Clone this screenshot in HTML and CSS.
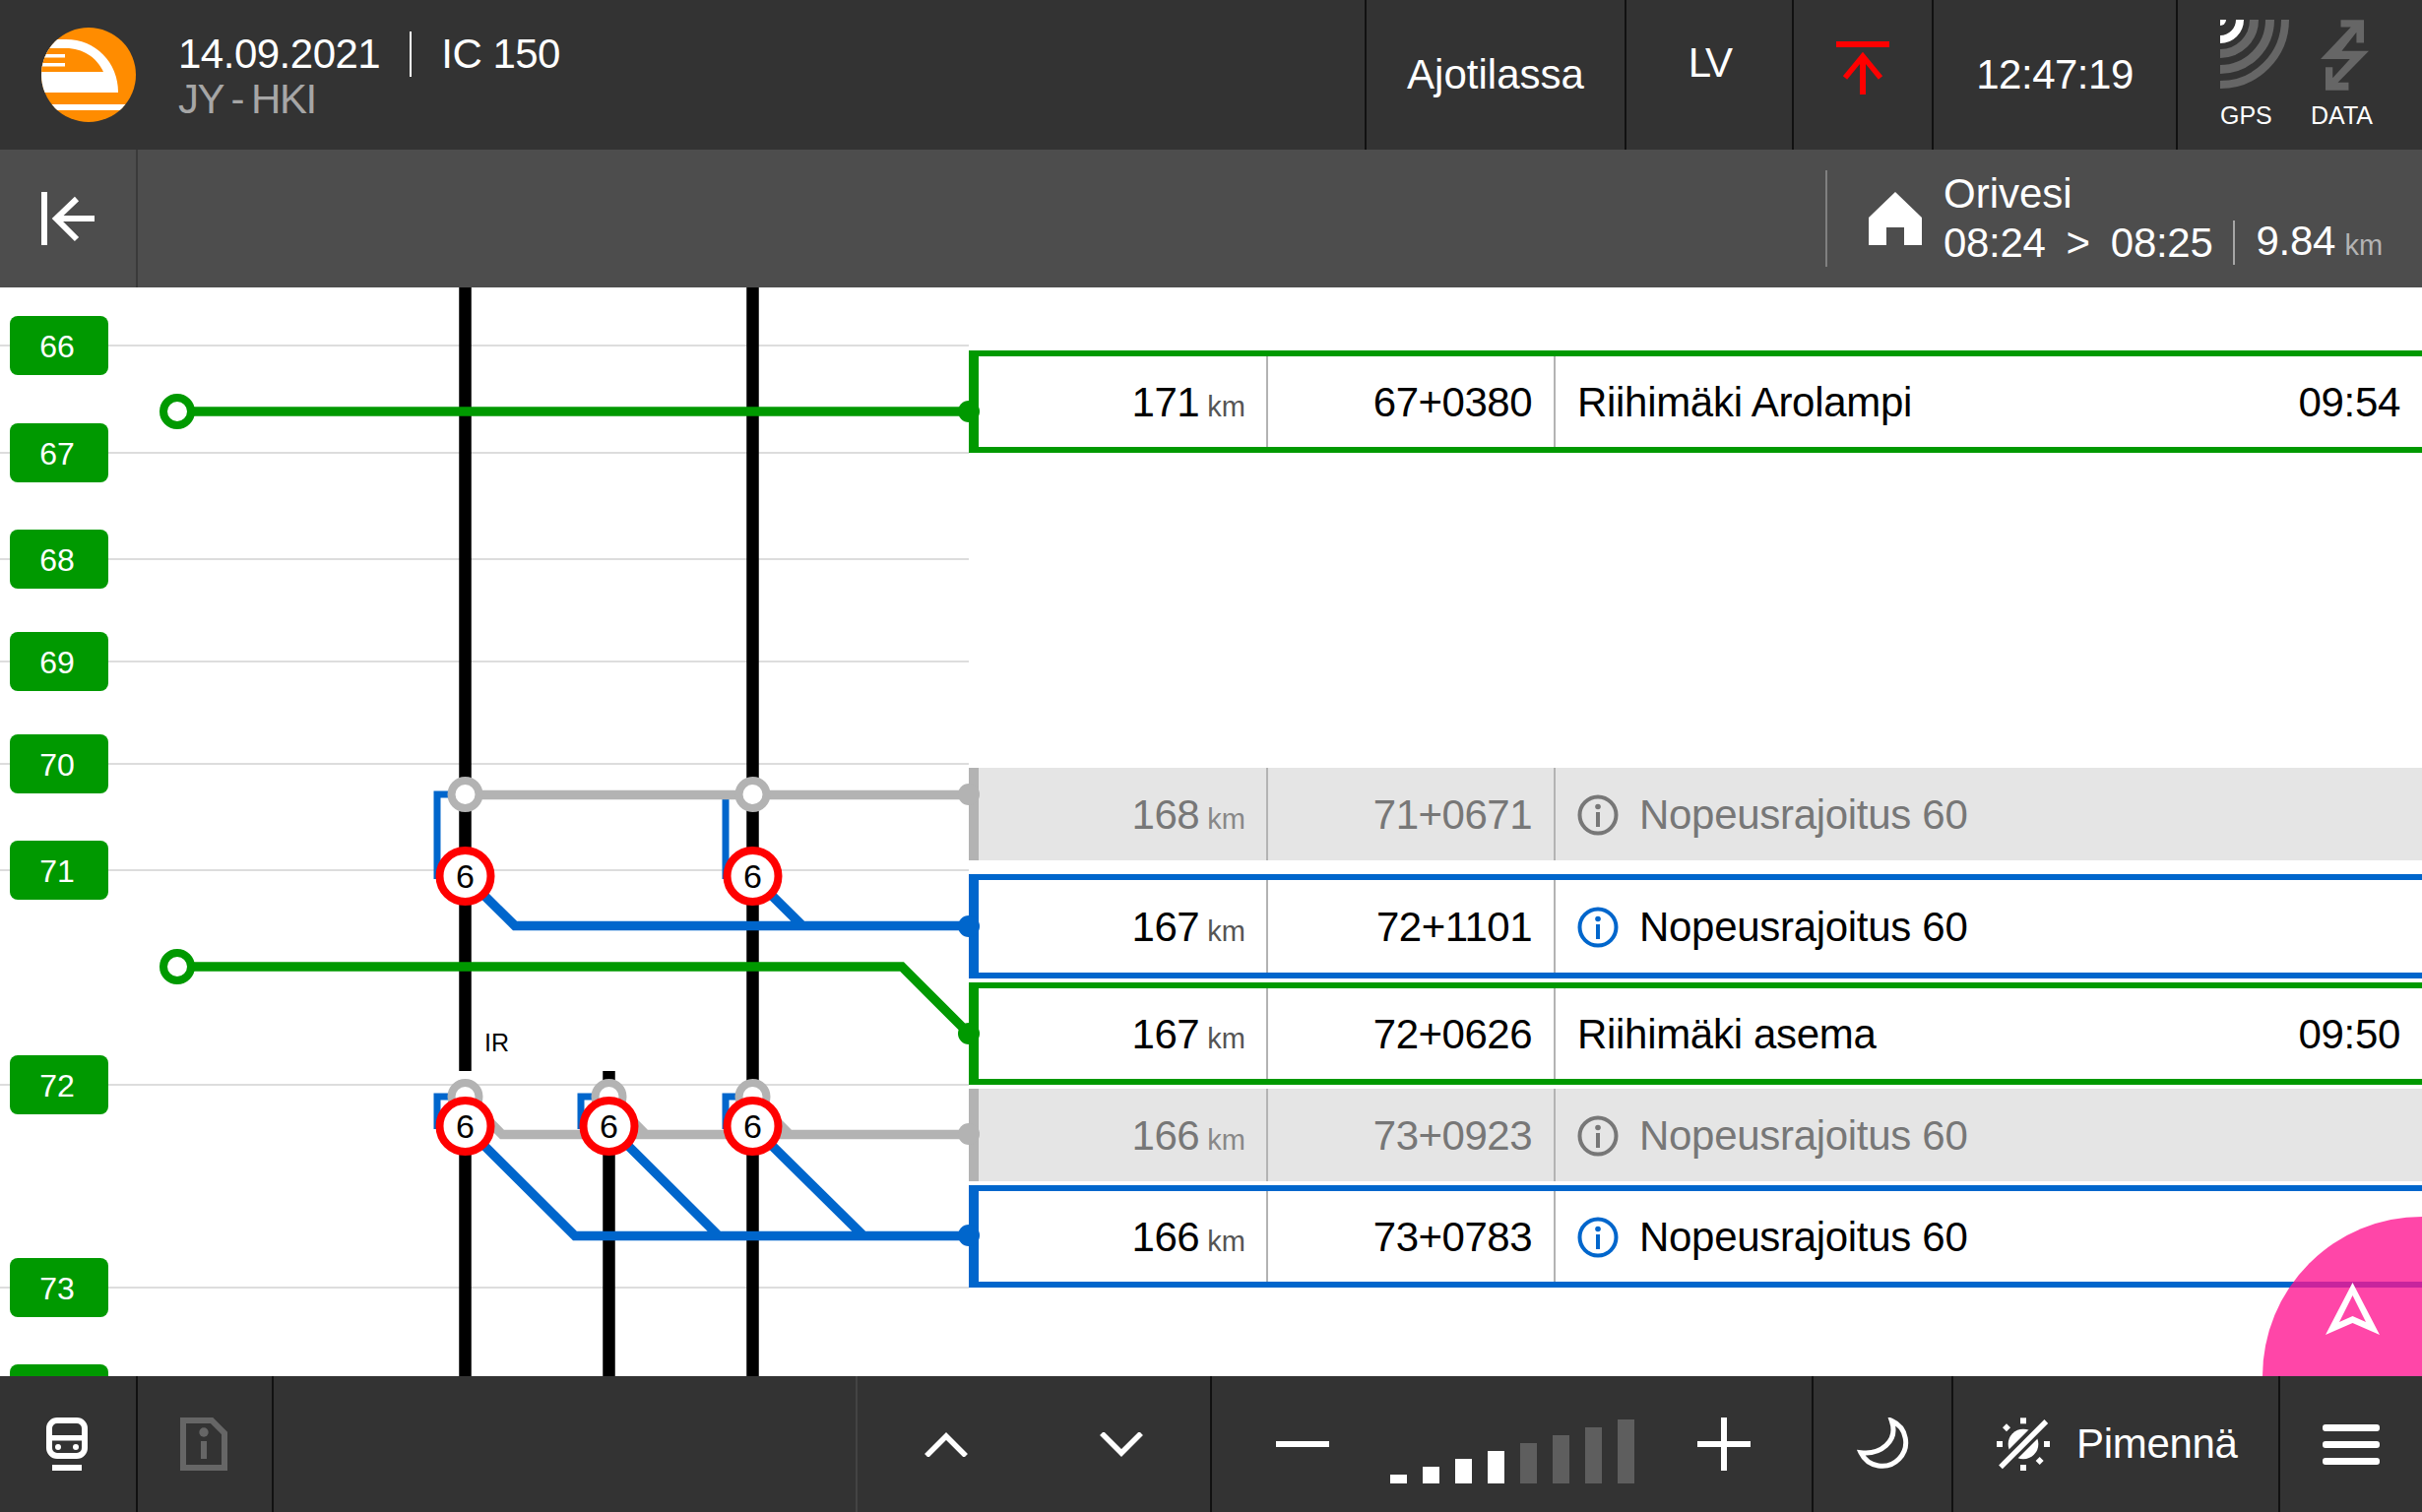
FILE: index.html
```html
<!DOCTYPE html>
<html lang="fi">

<head>
    <meta charset="UTF-8">
    <title>Ajotila - IC 150</title>
    <link rel="stylesheet" href="styles.css">
</head>

<body>
    <div class="screen">

        <!-- Top bar -->
        <header class="topbar">
            <svg class="logo" viewBox="0 0 96 96" width="96" height="96">
                <clipPath id="logoClip"><circle cx="48" cy="48" r="48"/></clipPath>
                <g clip-path="url(#logoClip)">
                    <rect width="96" height="96" fill="#ff8c00"/>
                    <path d="M0 12H25C55 12 78 35 78 66H0Z" fill="#fff"/>
                    <path d="M0 21H25C42 21 56 30 63 45H0Z" fill="#ff8c00"/>
                    <rect x="0" y="27" width="24" height="3.5" fill="#fff"/>
                    <rect x="0" y="36" width="24" height="3.5" fill="#fff"/>
                    <rect x="0" y="78" width="96" height="6" fill="#fff"/>
                </g>
            </svg>
            <div class="trip">
                <div class="trip-main">
                    <span class="digits">14.09.2021</span>
                    <span class="trip-sep"></span>
                    <span class="digits">IC 150</span>
                </div>
                <div class="trip-route">JY - HKI</div>
            </div>
            <div class="top-cell cell-mode">Ajotilassa</div>
            <div class="top-cell cell-lv"><span>LV</span></div>
            <div class="top-cell cell-dir">
                <svg viewBox="0 0 54 54" width="54" height="54">
                    <rect x="0" y="0" width="54" height="6" fill="#f00"/>
                    <path d="M27 54V16" fill="none" stroke="#f00" stroke-width="6"/>
                    <path d="M9 37L27 15L45 37" fill="none" stroke="#f00" stroke-width="5.500"/>
                </svg>
            </div>
            <div class="top-cell cell-clock digits">12:47:19</div>
            <div class="top-cell cell-status">
                <div class="status-item status-gps">
                    <svg viewBox="0 0 70 72" width="70" height="72">
                        <clipPath id="gpsClip"><rect width="70" height="72"/></clipPath>
                        <g clip-path="url(#gpsClip)" fill="none">
                            <circle cx="0" cy="0" r="6" fill="#fff"/>
                            <circle cx="0" cy="0" r="20" stroke="#fff" stroke-width="8"/>
                            <circle cx="0" cy="0" r="34.5" stroke="#666" stroke-width="9"/>
                            <circle cx="0" cy="0" r="50.5" stroke="#666" stroke-width="9"/>
                            <circle cx="0" cy="0" r="66" stroke="#666" stroke-width="8"/>
                        </g>
                    </svg>
                    <span>GPS</span>
                </div>
                <div class="status-item status-data">
                    <svg viewBox="355 30 148 216" width="49" height="72">
                        <path d="M417 30H488V100H465V68L420 125H503L408 222H441V246H370V175H392V208L445 150H355L448 52H417Z" fill="#666"/>
                    </svg>
                    <span>DATA</span>
                </div>
            </div>
        </header>

        <!-- Next stop bar -->
        <div class="subbar">
            <div class="back-cell">
                <svg viewBox="0 0 54 54" width="54" height="54">
                    <rect x="0" y="0" width="6" height="54" fill="#fff"/>
                    <path d="M54 27H15M36 7L15 27L36 48" fill="none" stroke="#fff" stroke-width="6"/>
                </svg>
            </div>
            <div class="next-stop">
                <svg class="home-icon" viewBox="0 0 54 54" width="54" height="54">
                    <path d="M27 0L54 26V54H36V36H18V54H0V26Z" fill="#fff"/>
                </svg>
                <div class="next-text">
                    <div>Orivesi</div>
                    <div class="next-times">
                        <span>08:24</span>
                        <span>&gt;</span>
                        <span>08:25</span>
                        <span class="next-sep"></span>
                        <span>9.84 <small>km</small></span>
                    </div>
                </div>
            </div>
        </div>

        <!-- Track view -->
        <main class="track-view">
            <svg class="diagram" viewBox="0 292 1000 1106" width="1000" height="1106">
                <g class="grid-lines">
                    <path d="M0 351H984M0 460H984M0 568H984M0 672H984M0 776H984M0 884H984M0 1102H984M0 1308H984"/>
                </g>

                <g class="rails">
                    <path d="M472.5 292V1088M472.5 1114V1398M618.5 1088V1398M764.5 292V1398"/>
                </g>

                <g class="km-badges">
                    <rect x="10" y="321" width="100" height="60" rx="8"/><text x="58" y="363">66</text>
                    <rect x="10" y="430" width="100" height="60" rx="8"/><text x="58" y="472">67</text>
                    <rect x="10" y="538" width="100" height="60" rx="8"/><text x="58" y="580">68</text>
                    <rect x="10" y="642" width="100" height="60" rx="8"/><text x="58" y="684">69</text>
                    <rect x="10" y="746" width="100" height="60" rx="8"/><text x="58" y="788">70</text>
                    <rect x="10" y="854" width="100" height="60" rx="8"/><text x="58" y="896">71</text>
                    <rect x="10" y="1072" width="100" height="60" rx="8"/><text x="58" y="1114">72</text>
                    <rect x="10" y="1278" width="100" height="60" rx="8"/><text x="58" y="1320">73</text>
                    <rect x="10" y="1386" width="100" height="60" rx="8"/>
                </g>

                <!-- blue brackets lie under the grey lines -->
                <g class="line-thin">
                    <path d="M472 807H444V893M764 807H737V893"/>
                    <path d="M472 1114H444V1147M618 1114H590V1147M764 1114H737V1147"/>
                </g>

                <g class="line line-grey">
                    <path d="M472 807.500H984"/>
                    <path d="M472 1114L510 1152.500H984M618 1114L656 1152.500M764 1114L802 1152.500"/>
                    <circle class="ring" cx="472.5" cy="807" r="14"/>
                    <circle class="ring" cx="764.5" cy="807" r="14"/>
                    <circle class="ring" cx="472.5" cy="1114" r="14"/>
                    <circle class="ring" cx="618.5" cy="1114" r="14"/>
                    <circle class="ring" cx="764.5" cy="1114" r="14"/>
                    <circle class="dot" cx="984" cy="807" r="11"/>
                    <circle class="dot" cx="984" cy="1152" r="11"/>
                </g>

                <g class="line line-blue">
                    <path d="M472 890L523 940.500H984M764 890L815 940.500"/>
                    <path d="M472 1144L584 1255.500H984M618 1144L730 1255.500M764 1144L877 1255.500"/>
                    <circle class="dot" cx="984" cy="941" r="11"/>
                    <circle class="dot" cx="984" cy="1255" r="11"/>
                </g>

                <g class="line line-green">
                    <path d="M180 418H984"/>
                    <path d="M180 982H916L984 1050"/>
                    <circle class="ring" cx="180" cy="418" r="14"/>
                    <circle class="ring" cx="180" cy="982" r="14"/>
                    <circle class="dot" cx="984" cy="418" r="11"/>
                    <circle class="dot" cx="984" cy="1050" r="11"/>
                </g>

                <g class="speed-signs">
                    <circle cx="472.5" cy="890" r="26"/><text x="472.5" y="902">6</text>
                    <circle cx="764.5" cy="890" r="26"/><text x="764.5" y="902">6</text>
                    <circle cx="472.5" cy="1144" r="26"/><text x="472.5" y="1156">6</text>
                    <circle cx="618.5" cy="1144" r="26"/><text x="618.5" y="1156">6</text>
                    <circle cx="764.5" cy="1144" r="26"/><text x="764.5" y="1156">6</text>
                </g>

                <text class="rail-label" x="492" y="1068">IR</text>
            </svg>

            <div class="rows">
                <div class="row row-green">
                    <div class="col-km"><span>171 <small>km</small></span></div>
                    <div class="col-pos">67+0380</div>
                    <div class="col-name"><span>Riihimäki Arolampi</span><span class="col-time">09:54</span></div>
                </div>

                <div class="row row-grey row-after-gap">
                    <div class="col-km"><span>168 <small>km</small></span></div>
                    <div class="col-pos">71+0671</div>
                    <div class="col-name">
                        <svg class="info" viewBox="0 0 42 42" width="42" height="42"><circle cx="21" cy="21" r="18.500" fill="none" stroke="currentColor" stroke-width="4"/><circle cx="21" cy="12.500" r="2.800" fill="currentColor"/><rect x="19" y="18" width="4" height="15" fill="currentColor"/></svg>
                        <span>Nopeusrajoitus 60</span>
                    </div>
                </div>

                <div class="row row-blue row-tall">
                    <div class="col-km"><span>167 <small>km</small></span></div>
                    <div class="col-pos">72+1101</div>
                    <div class="col-name">
                        <svg class="info" viewBox="0 0 42 42" width="42" height="42"><circle cx="21" cy="21" r="18.500" fill="none" stroke="currentColor" stroke-width="4"/><circle cx="21" cy="12.500" r="2.800" fill="currentColor"/><rect x="19" y="18" width="4" height="15" fill="currentColor"/></svg>
                        <span>Nopeusrajoitus 60</span>
                    </div>
                </div>

                <div class="row row-green">
                    <div class="col-km"><span>167 <small>km</small></span></div>
                    <div class="col-pos">72+0626</div>
                    <div class="col-name"><span>Riihimäki asema</span><span class="col-time">09:50</span></div>
                </div>

                <div class="row row-grey">
                    <div class="col-km"><span>166 <small>km</small></span></div>
                    <div class="col-pos">73+0923</div>
                    <div class="col-name">
                        <svg class="info" viewBox="0 0 42 42" width="42" height="42"><circle cx="21" cy="21" r="18.500" fill="none" stroke="currentColor" stroke-width="4"/><circle cx="21" cy="12.500" r="2.800" fill="currentColor"/><rect x="19" y="18" width="4" height="15" fill="currentColor"/></svg>
                        <span>Nopeusrajoitus 60</span>
                    </div>
                </div>

                <div class="row row-blue">
                    <div class="col-km"><span>166 <small>km</small></span></div>
                    <div class="col-pos">73+0783</div>
                    <div class="col-name">
                        <svg class="info" viewBox="0 0 42 42" width="42" height="42"><circle cx="21" cy="21" r="18.500" fill="none" stroke="currentColor" stroke-width="4"/><circle cx="21" cy="12.500" r="2.800" fill="currentColor"/><rect x="19" y="18" width="4" height="15" fill="currentColor"/></svg>
                        <span>Nopeusrajoitus 60</span>
                    </div>
                </div>
            </div>

            <div class="nav-fab">
                <svg viewBox="0 0 55 53" width="55" height="53">
                    <path d="M27.500 0L55 53L27.500 41L0 53ZM27.500 13L14 40L27.500 34L41 40Z" fill="#fff" fill-rule="evenodd"/>
                </svg>
            </div>
        </main>

        <!-- Bottom bar -->
        <footer class="bottombar">
            <div class="bottom-cell cell-train">
                <svg viewBox="0 0 42 54" width="42" height="54">
                    <rect x="3" y="3" width="36" height="36" rx="8" fill="none" stroke="#fff" stroke-width="6"/>
                    <rect x="3" y="18" width="36" height="5.500" fill="#fff"/>
                    <circle cx="12" cy="30" r="3" fill="#fff"/>
                    <circle cx="30" cy="30" r="3" fill="#fff"/>
                    <rect x="6" y="48" width="30" height="6" fill="#fff"/>
                </svg>
            </div>
            <div class="bottom-cell cell-doc">
                <svg viewBox="0 0 48 54" width="48" height="54">
                    <path d="M3 3H32L45 16V51H3Z" fill="none" stroke="#666" stroke-width="6"/>
                    <circle cx="24" cy="15" r="4.700" fill="#666"/>
                    <rect x="21" y="24" width="6" height="18" fill="#666"/>
                </svg>
            </div>
            <div class="bottom-spacer"></div>
            <div class="bottom-cell cell-scroll">
                <svg viewBox="0 0 44 25" width="44" height="25"><path d="M2 24L22 4L42 24" fill="none" stroke="#fff" stroke-width="5.500"/></svg>
                <svg viewBox="0 0 44 25" width="44" height="25"><path d="M2 1L22 21L42 1" fill="none" stroke="#fff" stroke-width="5.500"/></svg>
            </div>
            <div class="bottom-cell cell-bright">
                <span class="minus"></span>
                <div class="bars">
                    <span class="bar-on" style="height: 9px"></span>
                    <span class="bar-on" style="height: 17px"></span>
                    <span class="bar-on" style="height: 25px"></span>
                    <span class="bar-on" style="height: 33px"></span>
                    <span style="height: 41px"></span>
                    <span style="height: 49px"></span>
                    <span style="height: 57px"></span>
                    <span style="height: 65px"></span>
                </div>
                <span class="plus"></span>
            </div>
            <div class="bottom-cell cell-moon">
                <svg viewBox="50 46 162 162" width="54" height="54">
                    <path d="M156 56A72 72 0 1 1 62 153C120 160 178 120 156 56Z" fill="none" stroke="#fff" stroke-width="15"/>
                </svg>
            </div>
            <div class="bottom-cell cell-dim">
                <svg viewBox="474 44 162 162" width="54" height="54">
                    <circle cx="555" cy="125" r="46" fill="#fff"/>
                    <path d="M484 196L626 54" stroke="#333" stroke-width="38"/>
                    <path d="M486 195L625 56" stroke="#fff" stroke-width="16"/>
                    <rect x="546" y="45" width="18" height="18" fill="#fff"/>
                    <rect x="546" y="188" width="18" height="18" fill="#fff"/>
                    <rect x="474" y="116" width="18" height="18" fill="#fff"/>
                    <rect x="618" y="116" width="18" height="18" fill="#fff"/>
                    <path d="M504 63L516 75L504 87L492 75ZM605 164L617 176L605 188L593 176Z" fill="#fff"/>
                </svg>
                <span>Pimennä</span>
            </div>
            <div class="bottom-cell cell-menu">
                <span></span>
                <span></span>
                <span></span>
            </div>
        </footer>
    </div>
</body>

</html>
```

FILE: styles.css
```css
* {
    box-sizing: border-box;
}

html,
body {
    margin: 0;
    padding: 0;
    overflow: hidden;
}

body {
    font-family: "Liberation Sans", Arial, sans-serif;
    font-size: 42px;
    background: #fff;
}

svg {
    display: block;
}

.digits {
    letter-spacing: -0.5px;
}

.screen {
    width: 2460px;
    height: 1536px;
    display: flex;
    flex-direction: column;
}

/* Top bar */
.topbar {
    height: 152px;
    display: flex;
    align-items: stretch;
    background: #333;
    color: #fff;
}

.logo {
    align-self: center;
    margin-left: 42px;
}

.trip {
    align-self: center;
    margin-left: 43px;
    flex: 1;
    line-height: 45px;
}

.trip-main {
    display: flex;
    align-items: center;
    padding-top: 2px;
}

.trip-sep {
    width: 2px;
    height: 46px;
    margin: 0 30px;
    background: #fff;
}

.trip-route {
    color: #a6a6a6;
    letter-spacing: -1.5px;
    word-spacing: -2px;
}

.top-cell {
    display: flex;
    align-items: center;
    justify-content: center;
    border-left: 2px solid #111;
}

.cell-mode {
    width: 264px;
}

.cell-lv {
    width: 170px;
}

.cell-lv span {
    margin-bottom: 24px;
    letter-spacing: -3px;
}

.cell-dir {
    width: 142px;
}

.cell-dir svg {
    margin-bottom: 14px;
}

.cell-clock {
    width: 248px;
}

.cell-status {
    width: 250px;
    justify-content: flex-start;
    align-items: flex-start;
    padding: 20px 0 0 43px;
}

.status-item {
    display: flex;
    flex-direction: column;
    font-size: 25px;
    line-height: 29px;
}

.status-item span {
    margin-top: 11px;
}

.status-gps {
    width: 92px;
}

.status-data {
    width: 63px;
    align-items: center;
}

.status-data svg {
    margin-left: 6px;
}

/* Next stop bar */
.subbar {
    height: 140px;
    display: flex;
    align-items: center;
    justify-content: space-between;
    background: #4d4d4d;
    color: #fff;
}

.back-cell {
    width: 140px;
    height: 100%;
    display: flex;
    align-items: center;
    padding-left: 42px;
    border-right: 2px solid #3a3a3a;
}

.next-stop {
    width: 606px;
    height: 98px;
    display: flex;
    align-items: center;
    padding-left: 42px;
    border-left: 2px solid #808080;
}

.home-icon {
    margin-right: 22px;
}

.next-text {
    line-height: 48px;
    padding-top: 1px;
}

.next-times {
    display: flex;
    align-items: center;
    gap: 21px;
    letter-spacing: -0.3px;
}

.next-sep {
    width: 2px;
    height: 45px;
    background: #a6a6a6;
}

.next-times small {
    margin-left: -2px;
    font-size: 29px;
    letter-spacing: 0;
    color: #b3b3b3;
}

/* Track view */
.track-view {
    position: relative;
    flex: 1;
    overflow: hidden;
}

.diagram {
    position: absolute;
    left: 0;
    top: 0;
    z-index: 2;
}

.grid-lines path {
    fill: none;
    stroke: #ddd;
    stroke-width: 2;
}

.rails path {
    fill: none;
    stroke: #000;
    stroke-width: 12.500;
}

.km-badges rect {
    fill: #090;
}

.km-badges text {
    font-size: 32px;
    fill: #fff;
    text-anchor: middle;
}

.line path {
    fill: none;
    stroke-width: 9.500;
}

.line .ring {
    fill: #fff;
    stroke-width: 8;
}

.line-thin path {
    fill: none;
    stroke: #06c;
    stroke-width: 7;
}

.line-grey path,
.line-grey .ring {
    stroke: #b3b3b3;
}

.line-grey .dot {
    fill: #b3b3b3;
}

.line-blue path {
    stroke: #06c;
}

.line-blue .dot {
    fill: #06c;
}

.line-green path,
.line-green .ring {
    stroke: #090;
}

.line-green .dot {
    fill: #090;
}

.speed-signs circle {
    fill: #fff;
    stroke: #f00;
    stroke-width: 8;
}

.speed-signs text {
    font-size: 34px;
    fill: #000;
    text-anchor: middle;
}

.rail-label {
    font-size: 25px;
    fill: #000;
}

.rows {
    margin-left: 984px;
    padding-top: 64px;
    display: flex;
    flex-direction: column;
    gap: 4px;
}

.row {
    height: 104px;
    display: grid;
    grid-template-columns: 294px 292px 1fr;
    border-style: solid;
    border-width: 6px 0 6px 10px;
    color: #000;
}

.row-green {
    border-color: #090;
}

.row-blue {
    border-color: #06c;
}

.row-tall {
    height: 106px;
    margin-top: 10px;
}

.row-grey {
    height: 94px;
    border-width: 0 0 0 10px;
    border-color: #b3b3b3;
    background: #e5e5e5;
    color: #777;
}

.row-after-gap {
    margin-top: 316px;
}

.col-km,
.col-pos {
    display: flex;
    align-items: center;
    justify-content: flex-end;
    border-right: 2px solid #b3b3b3;
    letter-spacing: -0.5px;
    padding-top: 2px;
}

.col-km {
    padding-right: 21px;
}

.col-km small {
    font-size: 29px;
    color: #555;
    letter-spacing: 0;
    margin-left: -3px;
}

.row-grey .col-km small {
    color: #888;
}

.col-pos {
    padding-right: 22px;
}

.col-name {
    display: flex;
    align-items: center;
    padding: 2px 22px 0;
    letter-spacing: -0.3px;
}

.col-time {
    margin-left: auto;
}

.info {
    margin-right: 21px;
    color: #777;
}

.row-blue .info {
    color: #06c;
}

/* Round button over the rows, cut by the bottom bar */
.nav-fab {
    position: absolute;
    left: 2298px;
    top: 944px;
    width: 324px;
    height: 324px;
    z-index: 3;
    border-radius: 50%;
    background: rgba(255, 18, 143, 0.78);
}

.nav-fab svg {
    position: absolute;
    left: 64px;
    top: 67px;
}

/* Bottom bar */
.bottombar {
    height: 138px;
    display: flex;
    background: #333;
    color: #fff;
    position: relative;
    z-index: 4;
}

.bottom-cell {
    display: flex;
    align-items: center;
}

.cell-train {
    width: 140px;
    justify-content: center;
    border-right: 2px solid #111;
}

.cell-train svg {
    margin-right: 3px;
}

.cell-doc {
    width: 138px;
    justify-content: center;
    border-right: 2px solid #111;
}

.cell-doc svg {
    margin-right: 2px;
}

.bottom-spacer {
    width: 593px;
    border-right: 2px solid #444;
}

.cell-scroll {
    width: 360px;
    justify-content: center;
    gap: 134px;
    border-right: 2px solid #111;
}

.cell-bright {
    width: 611px;
    padding-left: 65px;
    border-right: 2px solid #111;
}

.minus {
    width: 54px;
    height: 6px;
    background: #fff;
}

.bars {
    display: flex;
    align-items: flex-end;
    gap: 16px;
    height: 65px;
    margin: 15px 64px 0 62px;
}

.bars span {
    width: 17px;
    background: #5e5e5e;
}

.bars .bar-on {
    background: #fff;
}

.plus {
    position: relative;
    width: 54px;
    height: 6px;
    background: #fff;
}

.plus::after {
    content: "";
    position: absolute;
    left: 24px;
    top: -24px;
    width: 6px;
    height: 54px;
    background: #fff;
}

.cell-moon {
    width: 142px;
    justify-content: center;
    border-right: 2px solid #111;
}

.cell-moon svg {
    margin-left: 2px;
}

.cell-dim {
    width: 332px;
    padding-left: 44px;
    gap: 27px;
    letter-spacing: -0.3px;
    border-right: 2px solid #111;
}

.cell-menu {
    flex: 1;
    flex-direction: column;
    justify-content: center;
    gap: 10px;
}

.cell-menu span {
    width: 58px;
    height: 7px;
    border-radius: 3px;
    background: #fff;
}
```
